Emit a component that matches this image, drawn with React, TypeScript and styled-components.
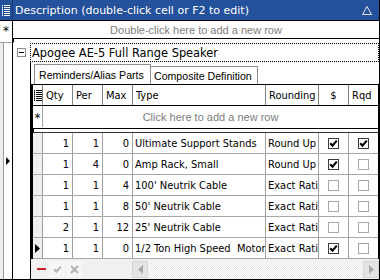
import React from "react";
import styled, { createGlobalStyle } from "styled-components";

const Global = createGlobalStyle`
  html, body { margin: 0; padding: 0; background: #fff; }
  body { font-family: "DejaVu Sans", Verdana, sans-serif; }
  * { box-sizing: border-box; }
`;

const TITLE_FONT = `"DejaVu Sans", Verdana, sans-serif`;
const GRID_FONT = `"DejaVu Sans Condensed", "DejaVu Sans", sans-serif`;
const UI_FONT = `"Liberation Sans", Arial, sans-serif`;

const Frame = styled.div`
  width: 380px;
  height: 280px;
  overflow: hidden;
  display: flex;
  flex-direction: column;
  background: #fff;
  border-right: 1px solid #000;
  border-bottom: 1px solid #000;
`;

const TitleBar = styled.div`
  display: flex;
  height: 21px;
  background: #24519b;
  border-bottom: 1px solid #000;
  flex: none;
`;

const TitleChooser = styled.div`
  width: 13px;
  border-right: 1px solid #17396f;
  display: flex;
  align-items: center;
  justify-content: center;
`;

const TitleText = styled.div`
  flex: 1;
  display: flex;
  align-items: center;
  padding-left: 2px;
  padding-right: 7px;
  color: #fff;
  font-family: ${TITLE_FONT};
  font-size: 11px;
  white-space: nowrap;
`;

const SortMark = styled.span`
  margin-left: auto;
  display: flex;
`;

const OuterAddRow = styled.div`
  display: flex;
  height: 17px;
  flex: none;
`;

const Selector = styled.div`
  width: 13px;
  flex: none;
  background: #fff;
  border-right: 1px solid #000;
  display: flex;
  align-items: center;
  justify-content: center;
`;

const Star = styled.span`
  font-family: ${TITLE_FONT};
  font-size: 12px;
  line-height: 1;
  color: #000;
  padding-top: 3px;
`;

const HintText = styled.div`
  flex: 1;
  display: flex;
  align-items: center;
  justify-content: center;
  color: #7d7d7d;
  font-family: ${UI_FONT};
  font-size: 11px;
  white-space: nowrap;
`;

const Body = styled.div`
  flex: 1;
  display: flex;
  min-height: 0;
`;

const Gutter = styled.div`
  width: 13px;
  flex: none;
  display: flex;
  flex-direction: column;
`;

const GutterCap = styled.div`
  height: 5px;
  border-right: 1px solid #000;
  border-bottom: 1px solid #a0a0a0;
`;

const GutterMain = styled.div`
  flex: 1;
  display: flex;
`;

const GrayStrip = styled.div`
  width: 4px;
  background: #ededed;
  border-right: 1px solid #9a9a9a;
`;

const GutterSelector = styled.div`
  flex: 1;
  border-right: 1px solid #000;
  display: flex;
  align-items: center;
  justify-content: center;
`;

const Content = styled.div`
  flex: 1;
  display: flex;
  flex-direction: column;
  min-width: 0;
`;

const RowSeparator = styled.div<{ $edge?: string }>`
  height: 5px;
  flex: none;
  border-top: 1px solid #000;
  border-bottom: 1px solid ${(p) => p.$edge || "transparent"};
  border-left: 1px solid #000;
  background: #fff;
`;

const ParentRow = styled.div`
  display: flex;
  height: 19px;
  flex: none;
`;

const ExpandCell = styled.div`
  width: 17px;
  flex: none;
  display: flex;
  align-items: center;
  padding-left: 4px;
`;

const ExpandBox = styled.div`
  width: 9px;
  height: 9px;
  border: 1px solid #8c8c8c;
  background: #fff;
  display: flex;
  align-items: center;
  justify-content: center;
  &::after {
    content: "";
    width: 5px;
    height: 1px;
    background: #000;
  }
`;

const FocusCell = styled.div`
  flex: 1;
  border: 1px dotted #000;
  display: flex;
  align-items: center;
  padding-left: 1px;
  font-family: ${TITLE_FONT};
  font-size: 11.4px;
  color: #000;
  white-space: nowrap;
`;

const BandArea = styled.div`
  flex: 1;
  display: flex;
  min-height: 0;
`;

const BandIndent = styled.div`
  width: 17px;
  flex: none;
`;

const BandBody = styled.div`
  flex: 1;
  display: flex;
  flex-direction: column;
  border-left: 1px solid #000;
  min-width: 0;
`;

const TabStrip = styled.div`
  height: 23px;
  flex: none;
  display: flex;
  align-items: flex-end;
  padding-left: 3px;
  border-bottom: 1px solid #000;
`;

const Tab = styled.div<{ $active?: boolean; $w: number }>`
  width: ${(p) => p.$w}px;
  height: ${(p) => (p.$active ? 20 : 18)}px;
  border-top: 1px solid #8f8f8f;
  border-right: 1px solid #8f8f8f;
  border-left: ${(p) => (p.$active ? "1px solid #8f8f8f" : "none")};
  background: #fff;
  display: flex;
  align-items: center;
  padding-left: ${(p) => (p.$active ? 4 : 3)}px;
  font-family: ${UI_FONT};
  font-size: 10.6px;
  color: #000;
  white-space: nowrap;
`;

const Grid = styled.div`
  display: flex;
  flex-direction: column;
  border-left: 2px solid #000;
  border-right: 1px solid #000;
  flex: none;
`;

const GridRow = styled.div<{ $h: number; $line: string }>`
  display: flex;
  height: ${(p) => p.$h}px;
  border-bottom: 1px solid ${(p) => p.$line};
  flex: none;
`;

const COLS = [10, 30, 30, 30, 133, 53, 30, 0];

const Cell = styled.div<{
  $col: number;
  $align?: "left" | "right" | "center";
  $bg?: string;
  $line?: string;
}>`
  width: ${(p) => (COLS[p.$col] ? `${COLS[p.$col]}px` : "auto")};
  flex: ${(p) => (COLS[p.$col] ? "none" : "1")};
  border-right: ${(p) => (COLS[p.$col] ? `1px solid ${p.$line || "#a0a0a0"}` : "none")};
  background: ${(p) => p.$bg || "#fff"};
  display: flex;
  align-items: center;
  justify-content: ${(p) =>
    p.$align === "right" ? "flex-end" : p.$align === "center" ? "center" : "flex-start"};
  padding: 0 ${(p) => (p.$align === "right" ? 3 : 0)}px 0
    ${(p) => (p.$align === "left" ? 2 : 0)}px;
  font-family: ${GRID_FONT};
  font-size: 11px;
  color: #000;
  white-space: pre;
  overflow: hidden;
`;

const HeadCell = styled(Cell)`
  padding-left: ${(p) => (p.$align === "center" ? 0 : 3)}px;
`;

const CheckBox = styled.span<{ $on?: boolean }>`
  width: 11px;
  height: 11px;
  border: 1px solid ${(p) => (p.$on ? "#3c3c3c" : "#a8a8a8")};
  background: #fff;
  display: flex;
  align-items: center;
  justify-content: center;
`;

const BottomBar = styled.div`
  flex: 1;
  display: flex;
  background: #f0f0f0;
  padding-top: 2px;
  min-height: 0;
`;

const ButtonGroup = styled.div`
  width: 101px;
  flex: none;
  display: flex;
  align-items: flex-start;
  padding-left: 3px;
`;

const BarButton = styled.div<{ $w: number; $plain?: boolean }>`
  width: ${(p) => p.$w}px;
  height: 16px;
  display: flex;
  align-items: center;
  justify-content: center;
  background: ${(p) => (p.$plain ? "transparent" : "#f6f6f6")};
  margin-right: 1px;
`;

const MinusMark = styled.span`
  width: 9px;
  height: 2px;
  background: #d21f26;
`;

const ScrollBar = styled.div`
  flex: 1;
  display: flex;
  height: 17px;
  background-color: #fff;
  background-image: repeating-conic-gradient(#e9e9e9 0 25%, #fdfdfd 0 50%);
  background-size: 2px 2px;
`;

const ScrollArrow = styled.div<{ $side: "left" | "right" }>`
  width: 16px;
  height: 17px;
  background: #e4e4e4;
  border: 1px solid #d6d6d6;
  display: flex;
  align-items: center;
  justify-content: center;
  margin-left: ${(p) => (p.$side === "right" ? "auto" : "0")};
`;

const ChooserIcon = ({ color }: { color: string }) => (
  <svg width="8" height="11" viewBox="0 0 8 11">
    {[0, 2, 4, 6, 8, 10].map((y) => (
      <g key={y} fill={color}>
        <rect x="0" y={y} width="1" height="1" />
        <rect x="2" y={y} width="6" height="1" />
      </g>
    ))}
    <rect x="0" y="0" width="1" height="11" fill={color} opacity="0.6" />
  </svg>
);

const ArrowRight = ({ color = "#000", w = 5, h = 9 }: { color?: string; w?: number; h?: number }) => (
  <svg width={w} height={h} viewBox={`0 0 ${w} ${h}`}>
    <polygon points={`0,0 ${w},${h / 2} 0,${h}`} fill={color} />
  </svg>
);

const Check = ({ color = "#000" }: { color?: string }) => (
  <svg width="9" height="9" viewBox="0 0 9 9">
    <path d="M1.2 4.2 L3.5 6.6 L7.8 1.6" fill="none" stroke={color} strokeWidth="2.1" />
  </svg>
);

type Row = {
  qty: number;
  per: number;
  max: number;
  type: string;
  rounding: string;
  cost: boolean;
  rqd: boolean;
  active?: boolean;
};

const rows: Row[] = [
  { qty: 1, per: 1, max: 0, type: "Ultimate Support Stands", rounding: "Round Up", cost: true, rqd: true },
  { qty: 1, per: 4, max: 0, type: "Amp Rack, Small", rounding: "Round Up", cost: true, rqd: false },
  { qty: 1, per: 1, max: 4, type: "100' Neutrik Cable", rounding: "Exact Ratio", cost: false, rqd: false },
  { qty: 1, per: 1, max: 8, type: "50' Neutrik Cable", rounding: "Exact Ratio", cost: false, rqd: false },
  { qty: 2, per: 1, max: 12, type: "25' Neutrik Cable", rounding: "Exact Ratio", cost: false, rqd: false },
  { qty: 1, per: 1, max: 0, type: "1/2 Ton High Speed  Motor", rounding: "Exact Ratio", cost: true, rqd: false, active: true },
];

export default function App() {
  return (
    <>
      <Global />
      <Frame>
        <TitleBar>
          <TitleChooser>
            <ChooserIcon color="#fff" />
          </TitleChooser>
          <TitleText>
            Description (double-click cell or F2 to edit)
            <SortMark>
              <svg width="10" height="9" viewBox="0 0 10 9">
                <polygon points="5,0.5 9.5,8.5 0.5,8.5" fill="none" stroke="#e6e6e6" strokeWidth="1" />
              </svg>
            </SortMark>
          </TitleText>
        </TitleBar>

        <OuterAddRow>
          <Selector>
            <Star>*</Star>
          </Selector>
          <HintText>Double-click here to add a new row</HintText>
        </OuterAddRow>

        <Body>
          <Gutter>
            <GutterCap />
            <GutterMain>
              <GrayStrip />
              <GutterSelector>
                <ArrowRight w={4} h={8} />
              </GutterSelector>
            </GutterMain>
          </Gutter>

          <Content>
            <RowSeparator />
            <ParentRow>
              <ExpandCell>
                <ExpandBox />
              </ExpandCell>
              <FocusCell>Apogee AE-5 Full Range Speaker</FocusCell>
            </ParentRow>

            <BandArea>
              <BandIndent />
              <BandBody>
                <TabStrip>
                  <Tab $active $w={117}>Reminders/Alias Parts</Tab>
                  <Tab $w={107}>Composite Definition</Tab>
                </TabStrip>

                <Grid>
                  <GridRow $h={21} $line="#000">
                    <HeadCell $col={0} $align="center" $line="#808080">
                      <ChooserIcon color="#000" />
                    </HeadCell>
                    <HeadCell $col={1} $line="#808080">Qty</HeadCell>
                    <HeadCell $col={2} $line="#808080">Per</HeadCell>
                    <HeadCell $col={3} $line="#808080">Max</HeadCell>
                    <HeadCell $col={4} $line="#808080">Type</HeadCell>
                    <HeadCell $col={5} $line="#808080">Rounding</HeadCell>
                    <HeadCell $col={6} $align="center" $line="#808080">$</HeadCell>
                    <HeadCell $col={7} $line="#808080">Rqd</HeadCell>
                  </GridRow>

                  <GridRow $h={22} $line="transparent">
                    <Cell $col={0} $align="center" $line="#a0a0a0">
                      <Star>*</Star>
                    </Cell>
                    <HintText>Click here to add a new row</HintText>
                  </GridRow>

                  <RowSeparator $edge="#333" />

                  {rows.map((r, i) => (
                    <GridRow key={i} $h={21} $line="#a8a8a8">
                      <Cell $col={0} $align="center" $bg="#efefef" $line="#a0a0a0">
                        {r.active ? <ArrowRight w={5} h={9} /> : null}
                      </Cell>
                      <Cell $col={1} $align="right">{r.qty}</Cell>
                      <Cell $col={2} $align="right">{r.per}</Cell>
                      <Cell $col={3} $align="right">{r.max}</Cell>
                      <Cell $col={4} $align="left">{r.type}</Cell>
                      <Cell $col={5} $align="left">{r.rounding}</Cell>
                      <Cell $col={6} $align="center">
                        <CheckBox $on={r.cost}>{r.cost ? <Check /> : null}</CheckBox>
                      </Cell>
                      <Cell $col={7} $align="center">
                        <CheckBox $on={r.rqd}>{r.rqd ? <Check /> : null}</CheckBox>
                      </Cell>
                    </GridRow>
                  ))}
                </Grid>

                <BottomBar>
                  <ButtonGroup>
                    <BarButton $w={14} $plain>
                      <MinusMark />
                    </BarButton>
                    <BarButton $w={16}>
                      <Check color="#b4b4b4" />
                    </BarButton>
                    <BarButton $w={16}>
                      <svg width="9" height="9" viewBox="0 0 9 9">
                        <path d="M1 1 L8 8 M8 1 L1 8" stroke="#b0b0b0" strokeWidth="1.8" />
                      </svg>
                    </BarButton>
                  </ButtonGroup>
                  <ScrollBar>
                    <ScrollArrow $side="left">
                      <svg width="5" height="9" viewBox="0 0 5 9">
                        <polygon points="5,0 0,4.5 5,9" fill="#a8a8a8" />
                      </svg>
                    </ScrollArrow>
                    <ScrollArrow $side="right">
                      <ArrowRight color="#a8a8a8" w={5} h={9} />
                    </ScrollArrow>
                  </ScrollBar>
                </BottomBar>
              </BandBody>
            </BandArea>
          </Content>
        </Body>
      </Frame>
    </>
  );
}
